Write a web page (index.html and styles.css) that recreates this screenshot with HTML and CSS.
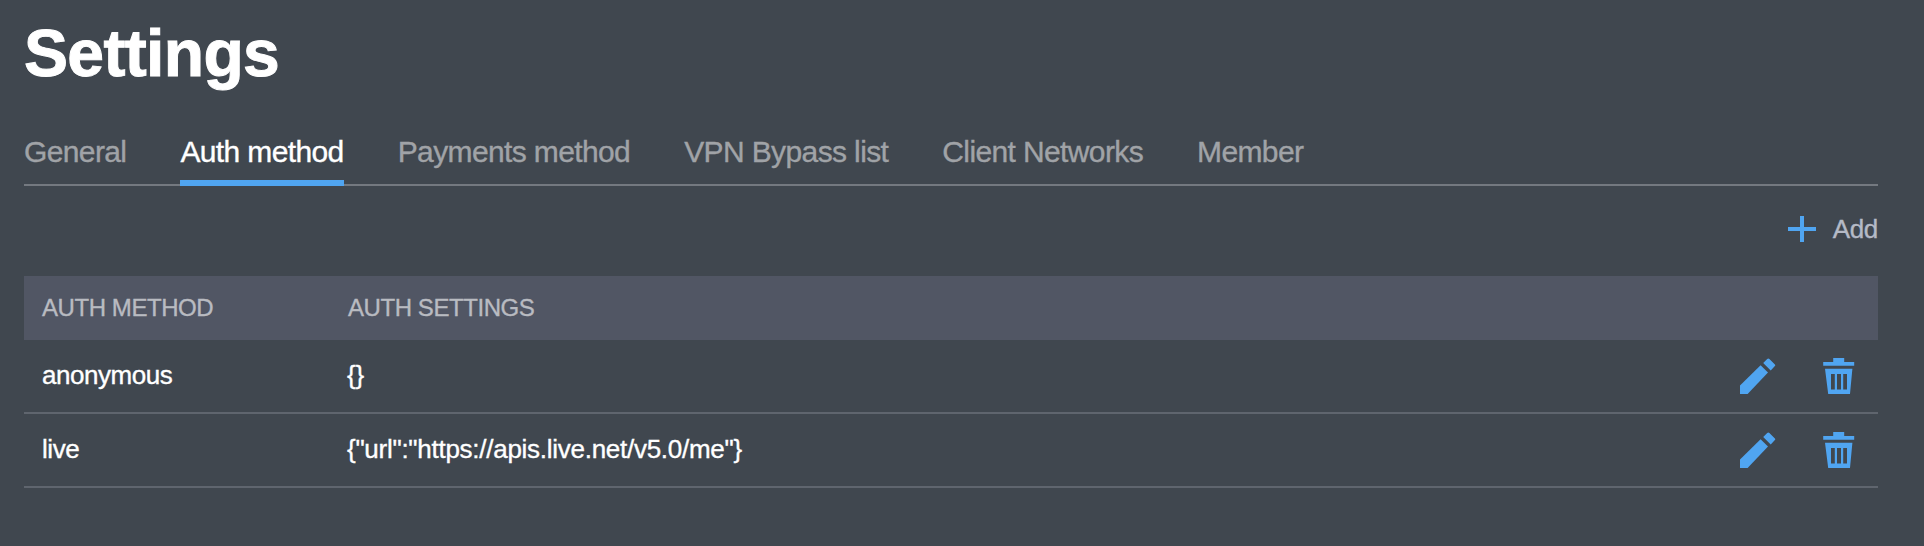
FILE: index.html
```html
<!DOCTYPE html>
<html lang="en">
<head>
<meta charset="utf-8">
<title>Settings</title>
<link rel="stylesheet" href="styles.css">
</head>
<body>
<svg class="sprite" aria-hidden="true">
  <symbol id="pencil" viewBox="0 0 36 36">
    <path d="M0 36V27.5L20.6 7.2L28 14.6L7.6 36Z"/>
    <path d="M23.2 4.9L27.2 0.9Q28.3 0 29.4 0.9L34.9 6.4Q35.8 7.2 34.9 8L30.7 12.4Z"/>
  </symbol>
  <symbol id="trash" viewBox="0 0 32 36">
    <path d="M0.2 4H10.2V0H21.2V4H31.2V7.8H0.2Z"/>
    <path fill-rule="evenodd" d="M2 10.8H29.4L27 36H5.2ZM8 16V31.6H11.8V16ZM14 16V31.6H18V16ZM20.2 16V31.6H24V16Z"/>
  </symbol>
</svg>
<main class="page">
  <h1 class="title">Settings</h1>
  <nav class="tabs">
    <a class="tab">General</a>
    <a class="tab tab-active">Auth method</a>
    <a class="tab">Payments method</a>
    <a class="tab">VPN Bypass list</a>
    <a class="tab">Client Networks</a>
    <a class="tab">Member</a>
  </nav>
  <div class="toolbar">
    <svg class="plus" viewBox="0 0 28 26"><path d="M12 0H16V11H28V15H16V26H12V15H0V11H12Z"/></svg>
    <span class="add">Add</span>
  </div>
  <div class="table">
    <div class="row head"><span>AUTH METHOD</span><span>AUTH SETTINGS</span></div>
    <div class="row">
      <span class="name">anonymous</span><span class="value">{}</span>
      <span class="actions"><svg class="pencil"><use href="#pencil"/></svg><svg class="trash"><use href="#trash"/></svg></span>
    </div>
    <div class="row">
      <span class="name">live</span><span class="value">{"url":"https://apis.live.net/v5.0/me"}</span>
      <span class="actions"><svg class="pencil"><use href="#pencil"/></svg><svg class="trash"><use href="#trash"/></svg></span>
    </div>
  </div>
</main>
</body>
</html>
```
FILE: styles.css
```css
* { box-sizing: border-box; }
body {
  margin: 0;
  background: #40474f;
  color: #fff;
  font-family: "Liberation Sans", Arial, sans-serif;
  -webkit-text-stroke: 0.35px currentColor;
}
svg { display: block; fill: #50a5f1; }
.sprite { width: 0; height: 0; position: absolute; }
.page { padding: 0 46px 0 24px; }
.title {
  margin: 0;
  padding-top: 12px;
  height: 124px;
  font-size: 66px;
  line-height: 82px;
  letter-spacing: -0.01em;
  -webkit-text-stroke-width: 1px;
}
.tabs {
  display: flex;
  gap: 54px;
  height: 62px;
  box-shadow: inset 0 -2px #747980;
}
.tab {
  padding-top: 8px;
  font-size: 30px;
  line-height: 40px;
  letter-spacing: -0.62px;
  color: #a0a3a7;
  white-space: nowrap;
}
.tab-active { color: #fff; border-bottom: 6px solid #50a5f1; }
.toolbar {
  display: flex;
  justify-content: flex-end;
  align-items: center;
  gap: 17px;
  height: 90px;
}
.plus { width: 28px; height: 26px; margin-top: -4px; }
.add {
  font-size: 26px;
  line-height: 30px;
  letter-spacing: -0.32px;
  margin-top: -4px;
  color: #b5bac6;
}
.row {
  display: grid;
  grid-template-columns: 306px 1fr auto;
  align-items: center;
  height: 74px;
  padding: 0 23px 0 18px;
  border-bottom: 2px solid #5f656e;
  font-size: 26px;
}
.name, .value { padding-bottom: 2px; }
.name { letter-spacing: -0.45px; }
.value { letter-spacing: -0.27px; margin-left: -1px; }
.head {
  height: 64px;
  border: 0;
  background: #515664;
  color: #b9bbc1;
  font-size: 24px;
  letter-spacing: -0.43px;
}
.actions { display: flex; gap: 47px; }
.pencil { width: 36px; height: 36px; }
.trash { width: 32px; height: 36px; }
```
